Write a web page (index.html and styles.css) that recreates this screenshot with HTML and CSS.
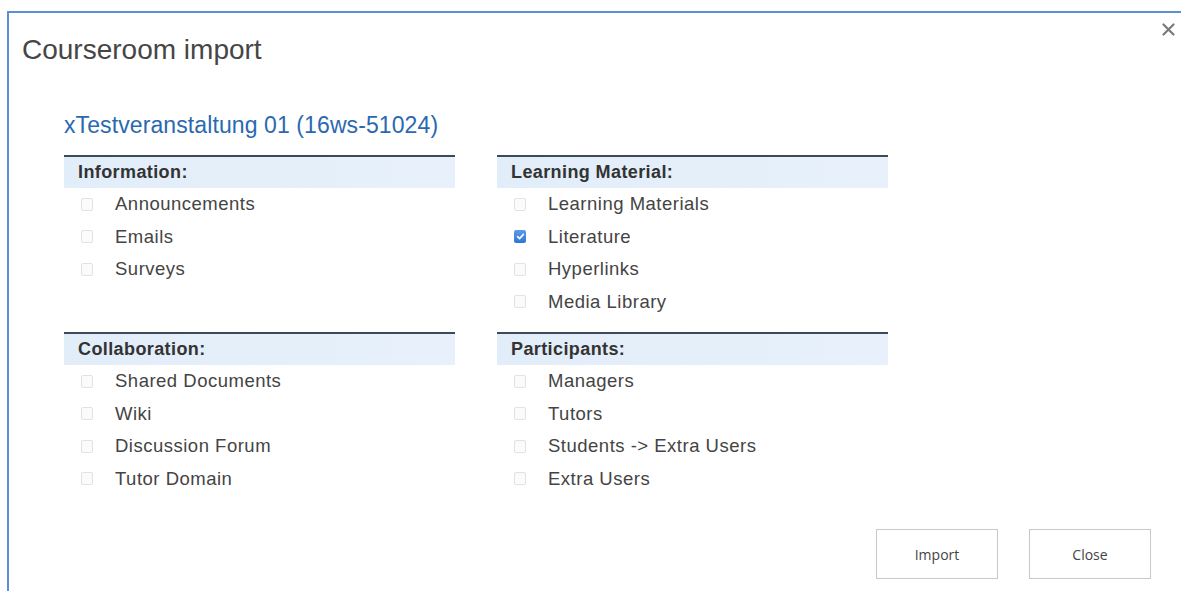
FILE: index.html
```html
<!DOCTYPE html>
<html lang="en">
<head>
<meta charset="utf-8">
<title>Courseroom import</title>
<link rel="stylesheet" href="styles.css">
</head>
<body>
<div class="dialog">
  <div class="dialog-header">
    <h1 class="dialog-title">Courseroom import</h1>
    <button class="dialog-close" type="button" aria-label="Close">
      <svg width="13" height="13" viewBox="0 0 13 13"><path d="M1.5 1.5 L11.5 11.5 M11.5 1.5 L1.5 11.5" stroke="#7a7a7a" stroke-width="2.2" stroke-linecap="round" fill="none"/></svg>
    </button>
  </div>

  <div class="dialog-body">
    <h2 class="course-name">xTestveranstaltung 01 (16ws-51024)</h2>

    <div class="sections">
      <section class="section">
        <div class="section-head">Information:</div>
        <label class="option"><span class="check"></span>Announcements</label>
        <label class="option"><span class="check"></span>Emails</label>
        <label class="option"><span class="check"></span>Surveys</label>
      </section>

      <section class="section">
        <div class="section-head">Learning Material:</div>
        <label class="option"><span class="check"></span>Learning Materials</label>
        <label class="option"><span class="check is-checked"><svg width="9" height="9" viewBox="0 0 9 9"><path d="M1.6 4.6 L3.6 6.6 L7.4 2.4" stroke="#fff" stroke-width="1.6" fill="none" stroke-linecap="round" stroke-linejoin="round"/></svg></span>Literature</label>
        <label class="option"><span class="check"></span>Hyperlinks</label>
        <label class="option"><span class="check"></span>Media Library</label>
      </section>

      <section class="section">
        <div class="section-head">Collaboration:</div>
        <label class="option"><span class="check"></span>Shared Documents</label>
        <label class="option"><span class="check"></span>Wiki</label>
        <label class="option"><span class="check"></span>Discussion Forum</label>
        <label class="option"><span class="check"></span>Tutor Domain</label>
      </section>

      <section class="section">
        <div class="section-head">Participants:</div>
        <label class="option"><span class="check"></span>Managers</label>
        <label class="option"><span class="check"></span>Tutors</label>
        <label class="option"><span class="check"></span>Students -&gt; Extra Users</label>
        <label class="option"><span class="check"></span>Extra Users</label>
      </section>
    </div>

    <div class="dialog-actions">
      <button class="btn" type="button">Import</button>
      <button class="btn" type="button">Close</button>
    </div>
  </div>
</div>
</body>
</html>
```

FILE: styles.css
```css
html, body {
  margin: 0;
  padding: 0;
  background: #fff;
  overflow: hidden;
}

body {
  width: 1181px;
  height: 591px;
  font-family: "Liberation Sans", Arial, sans-serif;
  color: #444;
}

.dialog {
  margin: 11px 0 0 7px;
  border-top: 2px solid #5b8fd6;
  border-left: 2px solid #5b8fd6;
  height: 580px;
  box-sizing: border-box;
  overflow: hidden;
}

/* header: title on the left, close cross on the right */
.dialog-header {
  display: flex;
  justify-content: space-between;
  align-items: flex-start;
  padding: 10px 6px 0 13px;
}

.dialog-title {
  margin: 10px 0 0 0;
  font-size: 28px;
  line-height: 34px;
  font-weight: normal;
  color: #464646;
}

.dialog-close {
  border: 0;
  background: none;
  padding: 0;
  width: 13px;
  height: 13px;
  display: flex;
}

.dialog-body {
  padding: 45px 30px 0 55px;
}

.course-name {
  margin: 0;
  font-size: 23px;
  line-height: 27px;
  font-weight: normal;
  letter-spacing: 0.1px;
  color: #2a69b0;
}

/* two-by-two grid of option groups */
.sections {
  margin-top: 16px;
  display: grid;
  grid-template-columns: 391px 391px;
  column-gap: 42px;
  row-gap: 14px;
}

.section-head {
  border-top: 2px solid #3d4a58;
  background: linear-gradient(to right, #e1edf9, #e8f1fb);
  height: 31px;
  padding-left: 14px;
  display: flex;
  align-items: center;
  font-size: 18px;
  font-weight: bold;
  letter-spacing: 0.4px;
  color: #333;
}

.option {
  display: flex;
  align-items: center;
  height: 32.5px;
  padding-left: 17px;
  font-size: 18.5px;
  letter-spacing: 0.5px;
  color: #444;
}

.check {
  width: 10px;
  height: 11px;
  margin-right: 22px;
  border: 1px solid #e2e2e2;
  border-radius: 2px;
  background: #fbfbfb;
  flex: none;
  display: flex;
  align-items: center;
  justify-content: center;
}

.check.is-checked {
  width: 12px;
  height: 13px;
  border: 0;
  margin-right: 22px;
  background: linear-gradient(#5b9cea, #2f77d6);
}

.dialog-actions {
  display: flex;
  justify-content: flex-end;
  gap: 31px;
  margin-top: 34px;
}

.btn {
  width: 122px;
  height: 50px;
  border: 1px solid #c9c9c9;
  background: #fff;
  font-family: "Open Sans", "Liberation Sans", sans-serif;
  font-size: 14px;
  color: #444;
  padding: 0;
}
```
